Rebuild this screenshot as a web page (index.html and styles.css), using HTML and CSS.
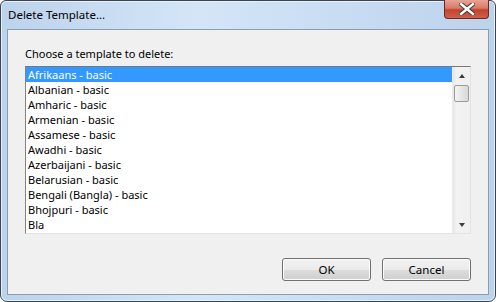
FILE: index.html
```html
<!DOCTYPE html>
<html>
  <head>
    <title>Delete Template...</title>
    <link rel="stylesheet" href="styles.css">
  </head>
  <body>
    <div class="window">
      <div class="titlebar">
        <span class="title">Delete Template...</span>
        <div class="close">
          <svg width="16" height="12" viewBox="0 0 16 12">
            <path d="M2 1 L14 11 M14 1 L2 11" stroke="#3b3b3b" stroke-width="4.4" stroke-linecap="square" />
            <path d="M2 1 L14 11 M14 1 L2 11" stroke="#ffffff" stroke-width="2.4" stroke-linecap="square" />
          </svg>
        </div>
      </div>

      <div class="client">
        <div class="label">Choose a template to delete:</div>

        <div class="listbox">
          <ul class="items">
            <li class="selected">Afrikaans - basic</li>
            <li>Albanian - basic</li>
            <li>Amharic - basic</li>
            <li>Armenian - basic</li>
            <li>Assamese - basic</li>
            <li>Awadhi - basic</li>
            <li>Azerbaijani - basic</li>
            <li>Belarusian - basic</li>
            <li>Bengali (Bangla) - basic</li>
            <li>Bhojpuri - basic</li>
            <li>Bla</li>
          </ul>
          <div class="scrollbar">
            <div class="arrow up"></div>
            <div class="thumb"></div>
            <div class="track"></div>
            <div class="arrow down"></div>
          </div>
        </div>

        <div class="buttons">
          <button>OK</button>
          <button>Cancel</button>
        </div>
      </div>
    </div>
  </body>
</html>
```

FILE: styles.css
```css
body {
  margin: 0;
  font-family: "Noto Sans", "Open Sans", sans-serif;
  font-size: 11px;
  color: #000;
  background: #fff;
}
.window {
  width: 496px;
  height: 302px;
  box-sizing: border-box;
  border: 1px solid #3c4450;
  border-radius: 6px 6px 7px 7px;
  padding: 0 6px 6px 6px;
  display: flex;
  flex-direction: column;
  background: linear-gradient(90deg, #bcd3ec 0%, #d4e5f7 40%, #c8dcf2 70%, #bcd3ec 100%);
  box-shadow: inset 0 0 0 1px #e8f1fb;
}
.titlebar {
  height: 28px;
  display: flex;
  justify-content: space-between;
  align-items: flex-start;
}
.title {
  margin-top: 6px;
  margin-left: 1px;
  line-height: 15px;
  font-size: 11.5px;
}
.close {
  width: 45px;
  height: 19px;
  margin-top: -1px;
  box-sizing: border-box;
  border: 1px solid #6d2a22;
  border-top: none;
  border-radius: 0 0 4px 4px;
  background: linear-gradient(#e8a394 0%, #d97a68 45%, #c4432f 55%, #d0604a 100%);
  display: flex;
  align-items: center;
  justify-content: center;
}
.client {
  flex: 1;
  background: #f0f0f0;
  border: 1px solid #8d9db0;
  padding: 16px 17px 0 17px;
  display: flex;
  flex-direction: column;
}
.label {
  line-height: 15px;
  margin-bottom: 5px;
}
.listbox {
  height: 168px;
  box-sizing: border-box;
  border: 1px solid;
  border-color: #787878 #e3e3e3 #e3e3e3 #828282;
  background: #fff;
  display: flex;
}
.items {
  list-style: none;
  margin: 0;
  padding: 0;
  flex: 1;
}
.items li {
  height: 15px;
  line-height: 15px;
  padding-left: 2px;
  white-space: nowrap;
}
.items li.selected {
  background: #3399ff;
  color: #fff;
}
.scrollbar {
  width: 17px;
  background: linear-gradient(90deg, #e6e6e6, #f2f2f2 20%, #f0f0f0);
  border-left: 1px solid #ececec;
  display: flex;
  flex-direction: column;
}
.arrow {
  height: 17px;
  display: flex;
  align-items: center;
  justify-content: center;
}
.arrow::after {
  content: "";
  width: 0;
  height: 0;
  border-left: 3.5px solid transparent;
  border-right: 3.5px solid transparent;
}
.arrow.up::after {
  border-bottom: 4px solid #3c3c3c;
}
.arrow.down::after {
  border-top: 4px solid #3c3c3c;
}
.thumb {
  height: 17px;
  margin: 1px 1px 0 1px;
  box-sizing: border-box;
  border: 1px solid #9b9b9b;
  border-radius: 2px;
  background: linear-gradient(90deg, #f4f4f4, #e6e6e6 50%, #d8d8d8);
}
.track {
  flex: 1;
}
.buttons {
  display: flex;
  justify-content: flex-end;
  gap: 11px;
  margin-top: 24px;
}
button {
  width: 89px;
  height: 23px;
  font-family: inherit;
  font-size: 11.5px;
  color: #000;
  border: 1px solid #707070;
  border-radius: 3px;
  background: linear-gradient(#f2f2f2 0%, #ebebeb 50%, #dddddd 51%, #cfcfcf 100%);
  box-shadow: inset 0 0 0 1px #fcfcfc;
  padding: 0;
}
```
